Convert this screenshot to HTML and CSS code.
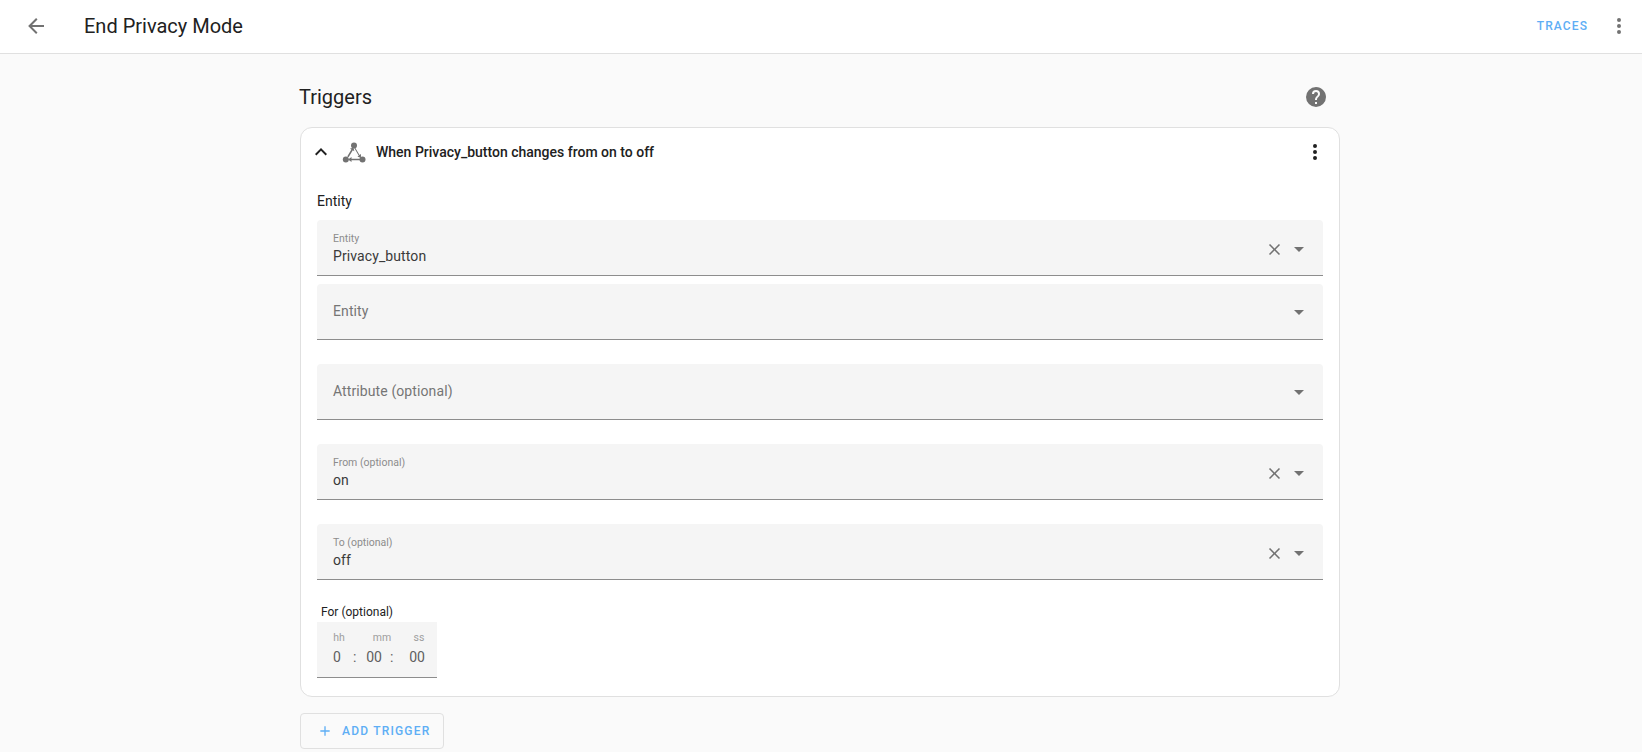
FILE: index.html
```html
<!DOCTYPE html>
<html lang="en">
<head>
<meta charset="utf-8">
<title>End Privacy Mode</title>
<link rel="stylesheet" href="styles.css">
</head>
<body>
<header class="topbar">
  <button class="icon-btn back" aria-label="Back">
    <svg viewBox="0 0 24 24" class="i24 grey"><path d="M20,11V13H8L13.5,18.5L12.08,19.92L4.16,12L12.08,4.08L13.5,5.5L8,11H20Z"/></svg>
  </button>
  <h1 class="title">End Privacy Mode</h1>
  <a class="traces">TRACES</a>
  <button class="icon-btn more" aria-label="Menu">
    <svg viewBox="0 0 24 24" class="i24 grey"><path d="M12,16A2,2 0 0,1 14,18A2,2 0 0,1 12,20A2,2 0 0,1 10,18A2,2 0 0,1 12,16M12,10A2,2 0 0,1 14,12A2,2 0 0,1 12,14A2,2 0 0,1 10,12A2,2 0 0,1 12,10M12,4A2,2 0 0,1 14,6A2,2 0 0,1 12,8A2,2 0 0,1 10,6A2,2 0 0,1 12,4Z"/></svg>
  </button>
</header>
<main class="content">
  <div class="section-head">
    <h2 class="section-title">Triggers</h2>
    <svg viewBox="0 0 24 24" class="i24 grey help"><path d="M15.07,11.25L14.17,12.17C13.45,12.89 13,13.5 13,15H11V14.5C11,13.39 11.45,12.39 12.17,11.67L13.41,10.41C13.78,10.05 14,9.55 14,9C14,7.89 13.1,7 12,7A2,2 0 0,0 10,9H8A4,4 0 0,1 12,5A4,4 0 0,1 16,9C16,9.88 15.64,10.67 15.07,11.25M13,19H11V17H13M12,2A10,10 0 0,0 2,12A10,10 0 0,0 12,22A10,10 0 0,0 22,12C22,6.47 17.5,2 12,2Z"/></svg>
  </div>
  <section class="card">
    <div class="card-head">
      <svg viewBox="0 0 24 24" class="i24 dark chevron"><path d="M7.41,15.41L12,10.83L16.59,15.41L18,14L12,8L6,14L7.41,15.41Z"/></svg>
      <svg viewBox="0 0 24 24" class="i24 grey trig"><circle cx="12" cy="4.5" r="3"/><circle cx="3.8" cy="18.5" r="3"/><circle cx="20.5" cy="18.5" r="3"/><path d="M5.2 15.6L9.4 8.6l-1.5-.9 3.6-1.2.8 3.7-1.5-.9-4.2 7Z"/><path d="M13.1 6.6l4.4 7.4 1.5-.9-.1 3.8-3.5-1.4 1.4-.8-4.4-7.4Z"/><path d="M18 17.7H9.5V15.9L6 18.5l3.5 2.6v-1.8H18Z"/></svg>
      <span class="card-title">When Privacy_button changes from on to off</span>
      <svg viewBox="0 0 24 24" class="i24 dark card-more"><path d="M12,16A2,2 0 0,1 14,18A2,2 0 0,1 12,20A2,2 0 0,1 10,18A2,2 0 0,1 12,16M12,10A2,2 0 0,1 14,12A2,2 0 0,1 12,14A2,2 0 0,1 10,12A2,2 0 0,1 12,10M12,4A2,2 0 0,1 14,6A2,2 0 0,1 12,8A2,2 0 0,1 10,6A2,2 0 0,1 12,4Z"/></svg>
    </div>
    <div class="card-body">
      <div class="group-label">Entity</div>
      <div class="field filled tight">
        <div class="field-text"><span class="float">Entity</span><span class="value">Privacy_button</span></div>
        <svg viewBox="0 0 24 24" class="i24 grey clear"><path d="M19,6.41L17.59,5L12,10.59L6.41,5L5,6.41L10.59,12L5,17.59L6.41,19L12,13.41L17.59,19L19,17.59L13.41,12L19,6.41Z"/></svg>
        <span class="caret"></span>
      </div>
      <div class="field empty wide">
        <div class="field-text"><span class="placeholder">Entity</span></div>
        <span class="caret"></span>
      </div>
      <div class="field empty wide">
        <div class="field-text"><span class="placeholder">Attribute (optional)</span></div>
        <span class="caret"></span>
      </div>
      <div class="field filled wide">
        <div class="field-text"><span class="float">From (optional)</span><span class="value">on</span></div>
        <svg viewBox="0 0 24 24" class="i24 grey clear"><path d="M19,6.41L17.59,5L12,10.59L6.41,5L5,6.41L10.59,12L5,17.59L6.41,19L12,13.41L17.59,19L19,17.59L13.41,12L19,6.41Z"/></svg>
        <span class="caret"></span>
      </div>
      <div class="field filled wide">
        <div class="field-text"><span class="float">To (optional)</span><span class="value">off</span></div>
        <svg viewBox="0 0 24 24" class="i24 grey clear"><path d="M19,6.41L17.59,5L12,10.59L6.41,5L5,6.41L10.59,12L5,17.59L6.41,19L12,13.41L17.59,19L19,17.59L13.41,12L19,6.41Z"/></svg>
        <span class="caret"></span>
      </div>
      <div class="time-label">For (optional)</div>
      <div class="time">
        <div class="t-col t-h"><span class="t-unit">hh</span><span class="t-val">0</span></div>
        <span class="t-sep s1">:</span>
        <div class="t-col t-m"><span class="t-unit">mm</span><span class="t-val">00</span></div>
        <span class="t-sep s2">:</span>
        <div class="t-col t-s"><span class="t-unit">ss</span><span class="t-val">00</span></div>
      </div>
    </div>
  </section>
  <button class="add-btn">
    <svg viewBox="0 0 24 24" class="plus"><path d="M19,13H13V19H11V13H5V11H11V5H13V11H19V13Z"/></svg>
    <span>ADD TRIGGER</span>
  </button>
</main>
</body>
</html>
```
FILE: styles.css
```css
* { box-sizing: border-box; }
html, body { margin: 0; height: 100%; overflow: hidden; }
body { background: #fafafa; font-family: Roboto, "Noto Sans", sans-serif; color: #212121; }
button { font: inherit; border: 0; background: none; padding: 0; }
.i24 { width: 24px; height: 24px; display: block; flex: none; }
.grey { fill: #727272; }
.dark { fill: #212121; }

.topbar { height: 54px; background: #fff; border-bottom: 1px solid #e0e0e0; display: flex; align-items: center; padding-left: 24px; padding-right: 8px; }
.icon-btn { width: 24px; height: 24px; display: block; }
.back { margin-top: -2px; }
.title { margin: -2px 0 0 36px; font-size: 20px; font-weight: 400; line-height: 52px; letter-spacing: 0; flex: 1; }
.traces { font-size: 12px; font-weight: 500; letter-spacing: 1.1px; color: #5eaef5; margin: -2px 19px 0 0; }
.more { margin: -2px 3px 0 0; }

.content { width: 1040px; margin-left: 300px; }
.section-head { display: flex; align-items: center; height: 73px; justify-content: space-between; padding-right: 12px; }
.section-title { margin: 13px 0 0 -1px; font-size: 20px; font-weight: 400; line-height: 28px; }
.help { margin-top: 12px; }

.card { width: 1040px; height: 570px; background: #fff; border: 1px solid #e0e0e0; border-radius: 12px; }
.card-head { height: 48px; display: flex; align-items: center; padding-left: 8px; padding-right: 12px; }
.chevron { margin-left: 0; }
.trig { margin-left: 9px; width: 24px; height: 24px; margin-top: 1px; }
.card-title { margin-left: 10px; font-size: 14px; font-weight: 500; flex: 1; line-height: 48px; margin-top: -1px; }
.card-body { padding: 0 16px; }
.group-label { margin-top: 15px; font-size: 14px; line-height: 20px; height: 29px; }

.field { height: 56px; width: 1006px; background: #f5f5f5; border-bottom: 1px solid #8d8d8d; border-radius: 4px 4px 0 0; display: flex; align-items: center; padding: 0 16px; position: relative; }
.tight { margin-bottom: 8px; }
.wide { margin-bottom: 24px; }
.field-text { flex: 1; display: flex; flex-direction: column; }
.float { font-size: 10.5px; line-height: 14px; color: #8c8c8c; margin-top: 1px; }
.value { font-size: 14px; line-height: 18px; color: #3a3a3a; letter-spacing: .1px; margin-top: 1px; }
.placeholder { font-size: 14px; line-height: 20px; color: #757575; letter-spacing: .1px; margin-top: -2px; }
.clear { width: 19px; height: 19px; margin-right: 10px; margin-top: 3px; }
.caret { width: 0; height: 0; border-left: 5px solid transparent; border-right: 5px solid transparent; border-top: 5px solid #727272; margin: 3px 3px 0 0; }
.empty .caret { margin-top: 2px; }

.time-label { margin-top: 4px; margin-left: 4px; font-size: 12px; line-height: 16px; height: 18px; }
.time { width: 120px; height: 56px; background: #f5f5f5; border-bottom: 1px solid #8d8d8d; position: relative; color: #616161; }
.t-col { position: absolute; top: 8px; display: flex; flex-direction: column; align-items: center; width: 24px; }
.t-h { left: 8px; }
.t-m { left: 45px; }
.t-s { left: 88px; }
.t-unit { font-size: 10.5px; line-height: 16px; color: #9e9e9e; }
.t-h .t-unit { margin-left: 4px; }
.t-m .t-unit { margin-left: 16px; }
.t-s .t-unit { margin-left: 4px; }
.t-val { font-size: 14px; line-height: 20px; color: #5f5f5f; margin-top: 1px; }
.t-sep { position: absolute; top: 26px; font-size: 14px; line-height: 18px; color: #5f5f5f; }
.s1 { left: 36px; }
.s2 { left: 73px; }

.add-btn { margin-top: 16px; width: 144px; height: 36px; border: 1px solid #e0e0e0; border-radius: 4px; display: flex; align-items: center; padding-left: 16px; color: #5eaef5; font-size: 12px; font-weight: 500; letter-spacing: 1.2px; }
.plus { width: 16px; height: 16px; fill: #5eaef5; margin-right: 9px; flex: none; }
```
